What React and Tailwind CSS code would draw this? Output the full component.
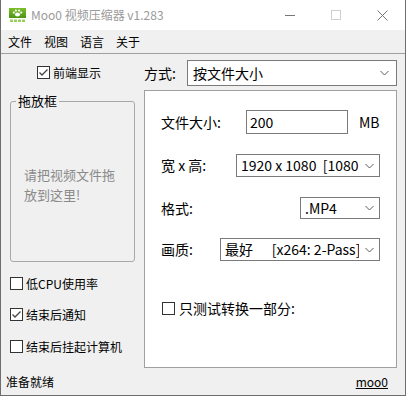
import React from "react";

function Chevron() {
  return (
    <svg width="9" height="6" viewBox="0 0 9 6" className="shrink-0">
      <polyline points="0.5,1 4.5,5 8.5,1" fill="none" stroke="#5a5a5a" strokeWidth="1" />
    </svg>
  );
}

function Check({ checked }) {
  return (
    <span className="w-[13px] h-[13px] border border-[#333333] bg-white flex items-center justify-center shrink-0">
      {checked && (
        <svg width="11" height="11" viewBox="0 0 11 11">
          <polyline points="1.5,5.5 4,8 9.5,2.5" fill="none" stroke="#444" strokeWidth="1.3" />
        </svg>
      )}
    </span>
  );
}

function AppIcon() {
  return (
    <svg width="17" height="15" viewBox="0 0 17 15">
      <defs>
        <linearGradient id="g" x1="0" y1="0" x2="0" y2="1">
          <stop offset="0" stopColor="#7cbf2a" />
          <stop offset="1" stopColor="#4f9412" />
        </linearGradient>
      </defs>
      <rect x="0" y="0" width="17" height="10" fill="url(#g)" />
      <ellipse cx="8.5" cy="6.6" rx="2.6" ry="2" fill="#fff" />
      <circle cx="4.8" cy="4.6" r="1.1" fill="#fff" />
      <circle cx="12.2" cy="4.6" r="1.1" fill="#fff" />
      <circle cx="6.9" cy="2.6" r="1.1" fill="#fff" />
      <circle cx="10.1" cy="2.6" r="1.1" fill="#fff" />
      <rect x="1" y="11.5" width="3" height="2.5" fill="#9ccf5a" />
      <rect x="5" y="11.5" width="3" height="2.5" fill="#9ccf5a" />
      <rect x="9" y="11.5" width="3" height="2.5" fill="#9ccf5a" />
      <rect x="13" y="11.5" width="3" height="2.5" fill="#9ccf5a" />
    </svg>
  );
}

export default function App() {
  const font = "font-['Noto_Sans_CJK_SC','Noto_Sans',sans-serif]";
  return (
    <div className={`w-[406px] h-[396px] bg-[#f0f0f0] border-x border-b border-[#6e6e6e] flex flex-col overflow-hidden text-black ${font}`}>
      {/* title bar */}
      <div className="h-[30px] bg-white flex items-center shrink-0">
        <div className="ml-[8px] mt-[1px]"><AppIcon /></div>
        <span className="ml-[5px] text-[12px] text-[#9a9a9a] leading-none">Moo0 视频压缩器 v1.283</span>
        <div className="ml-auto flex items-center">
          <div className="w-[46px] h-[30px] flex items-center justify-center">
            <div className="w-[10px] h-px bg-[#777]" />
          </div>
          <div className="w-[46px] h-[30px] flex items-center justify-center">
            <div className="w-[10px] h-[10px] border border-[#cfcfcf]" />
          </div>
          <div className="w-[46px] h-[30px] flex items-center justify-center">
            <svg width="11" height="11" viewBox="0 0 11 11">
              <path d="M0.5 0.5 L10.5 10.5 M10.5 0.5 L0.5 10.5" stroke="#777" strokeWidth="1" />
            </svg>
          </div>
        </div>
      </div>
      {/* menu bar */}
      <div className="h-[24px] shrink-0 flex items-center text-[12px] border-b border-[#a0a0a0] pl-[7px] gap-[12px]">
        <span>文件</span>
        <span>视图</span>
        <span>语言</span>
        <span>关于</span>
      </div>
      {/* body */}
      <div className="flex flex-1">
        {/* left column */}
        <div className="w-[142px] shrink-0 flex flex-col">
          <div className="mt-[12px] ml-[36px] flex items-center gap-[3px] text-[12px] leading-[13px]">
            <Check checked />
            <span>前端显示</span>
          </div>
          <div className="relative mt-[22px] ml-[9px] w-[125px] h-[161px] border border-[#a8a8a8] rounded-[3px]">
            <span className="absolute top-[-9px] left-[5px] px-[2px] bg-[#f0f0f0] text-[13px] leading-[16px]">拖放框</span>
            <div className="pt-[63px] pl-[13px] text-[13px] leading-[20px] text-[#8a8a8a]">
              <div>请把视频文件拖</div>
              <div>放到这里!</div>
            </div>
          </div>
          <div className="mt-[15px] ml-[9px] flex flex-col gap-[18px] text-[12px] leading-[13px]">
            <div className="flex items-center gap-[3px]"><Check /><span>低CPU使用率</span></div>
            <div className="flex items-center gap-[3px]"><Check checked /><span>结束后通知</span></div>
            <div className="flex items-center gap-[3px] mt-px"><Check /><span>结束后挂起计算机</span></div>
          </div>
        </div>
        {/* right column */}
        <div className="flex-1 flex flex-col pr-[7px]">
          <div className="mt-[6px] flex items-center text-[14px]">
            <span className="w-[44px] pl-px">方式:</span>
            <div className="w-[210px] h-[26px] bg-white border border-[#7a7a7a] flex items-center pl-[5px] pr-[7px]">
              <span className="flex-1">按文件大小</span>
              <Chevron />
            </div>
          </div>
          <div className="mt-[4px] ml-px w-[253px] h-[278px] bg-white border border-[#a0a0a0] flex flex-col pl-[16px] pr-[16px] text-[14px]">
            <div className="mt-[19px] flex items-center">
              <span className="w-[85px]">文件大小:</span>
              <div className="w-[102px] h-[24px] border border-[#7a7a7a] flex items-center pl-[3px]">200</div>
              <span className="ml-[11px]">MB</span>
            </div>
            <div className="mt-[20px] flex items-center justify-between">
              <span>宽 x 高:</span>
              <div className="w-[144px] h-[23px] border border-[#7a7a7a] flex items-center pl-[4px] pr-[5px]">
                <span className="flex-1 overflow-hidden whitespace-pre">1920 x 1080  [1080p]</span>
                <span className="ml-[6px]"><Chevron /></span>
              </div>
            </div>
            <div className="mt-[20px] flex items-center justify-between">
              <span>格式:</span>
              <div className="w-[80px] h-[22px] border border-[#7a7a7a] flex items-center pl-[4px] pr-[5px]">
                <span className="flex-1">.MP4</span>
                <Chevron />
              </div>
            </div>
            <div className="mt-[19px] flex items-center justify-between">
              <span>画质:</span>
              <div className="w-[160px] h-[23px] border border-[#7a7a7a] flex items-center pl-[4px] pr-[5px]">
                <span className="flex-1 overflow-hidden whitespace-pre">最好      [x264: 2-Pass]</span>
                <span className="ml-[6px]"><Chevron /></span>
              </div>
            </div>
            <div className="mt-[37px] flex items-center gap-[4px] pl-px">
              <Check />
              <span>只测试转换一部分:</span>
            </div>
          </div>
        </div>
      </div>
      {/* status bar */}
      <div className="h-[26px] shrink-0 flex items-center text-[12px] pl-[5px] pr-[17px]">
        <span>准备就绪</span>
        <span className="ml-auto underline">moo0</span>
      </div>
    </div>
  );
}
